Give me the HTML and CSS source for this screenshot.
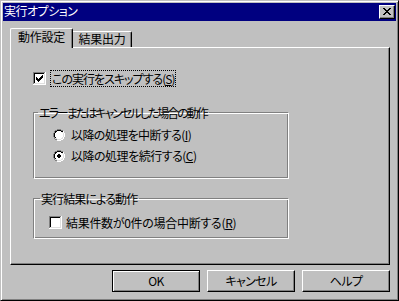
FILE: index.html
```html
<!DOCTYPE html>
<html lang="ja">
<head>
<meta charset="utf-8">
<title>実行オプション</title>
<link rel="stylesheet" href="styles.css">
</head>
<body>
<div class="window">
  <div class="titlebar">
    <span class="title">実行オプション</span>
    <div class="close">
      <svg width="8" height="7" viewBox="0 0 8 7" shape-rendering="crispEdges"><path d="M0 0h2v1H0z M6 0h2v1H6z M1 1h2v1H1z M5 1h2v1H5z M2 2h4v1H2z M3 3h2v1H3z M2 4h4v1H2z M1 5h2v1H1z M5 5h2v1H5z M0 6h2v1H0z M6 6h2v1H6z" fill="#000"/></svg>
    </div>
  </div>
  <div class="body">
    <div class="tabs">
      <div class="tab active">動作設定</div>
      <div class="tab second">結果出力</div>
    </div>
    <div class="panel">
      <div class="check first">
        <span class="box">
          <svg width="13" height="13" viewBox="0 0 13 13" shape-rendering="crispEdges"><path d="M0 0h12v1H1v11H0z" fill="#808080"/><path d="M12 0h1v13H0v-1h12z" fill="#fff"/><path d="M1 1h10v1H2v9H1z" fill="#000"/><path d="M11 1h1v11H1v-1h10z" fill="#dfdfdf"/><rect x="2" y="2" width="9" height="9" fill="#fff"/><path transform="translate(3 3)" d="M6 0h1v1h-1z M5 1h2v1h-2z M0 2h1v1h-1z M4 2h3v1h-3z M0 3h2v1h-2z M3 3h3v1h-3z M0 4h5v1h-5z M1 5h3v1h-3z M2 6h1v1h-1z" fill="#000"/></svg>
        </span>
        <span class="focus">この実行をスキップする(<u>S</u>)</span>
      </div>
      <fieldset class="group g1">
        <legend>エラーまたはキャンセルした場合の動作</legend>
        <div class="group-body radios">
          <div class="radio-row">
            <span class="radio">
              <svg width="12" height="12" viewBox="0 0 12 12" shape-rendering="crispEdges"><path d="M4 2h4v1H4z M3 3h6v1H3z M2 4h8v4H2z M3 8h6v1H3z M4 9h4v1H4z" fill="#fff"/><path d="M4 0h4v1H4z M2 1h2v1H2z M8 1h2v1H8z M1 2h1v2H1z M0 4h1v4H0z M1 8h1v2H1z M2 10h2v1H2z" fill="#808080"/><path d="M10 2h1v2h-1z M11 4h1v4h-1z M10 8h1v2h-1z M8 10h2v1H8z M4 11h4v1H4z" fill="#fff"/><path d="M4 1h4v1H4z M2 2h2v1H2z M8 2h2v1H8z M2 3h1v1H2z M1 4h1v4H1z M2 8h1v1H2z" fill="#000"/><path d="M9 3h1v1H9z M10 4h1v4h-1z M9 8h1v1H9z M2 9h2v1H2z M8 9h2v1H8z M4 10h4v1H4z" fill="#dfdfdf"/></svg>
            </span>
            <span class="label r1">以降の処理を中断する(<u>I</u>)</span>
          </div>
          <div class="radio-row">
            <span class="radio">
              <svg width="12" height="12" viewBox="0 0 12 12" shape-rendering="crispEdges"><path d="M4 2h4v1H4z M3 3h6v1H3z M2 4h8v4H2z M3 8h6v1H3z M4 9h4v1H4z" fill="#fff"/><path d="M4 0h4v1H4z M2 1h2v1H2z M8 1h2v1H8z M1 2h1v2H1z M0 4h1v4H0z M1 8h1v2H1z M2 10h2v1H2z" fill="#808080"/><path d="M10 2h1v2h-1z M11 4h1v4h-1z M10 8h1v2h-1z M8 10h2v1H8z M4 11h4v1H4z" fill="#fff"/><path d="M4 1h4v1H4z M2 2h2v1H2z M8 2h2v1H8z M2 3h1v1H2z M1 4h1v4H1z M2 8h1v1H2z" fill="#000"/><path d="M9 3h1v1H9z M10 4h1v4h-1z M9 8h1v1H9z M2 9h2v1H2z M8 9h2v1H8z M4 10h4v1H4z" fill="#dfdfdf"/><path d="M5 4h2v1H5z M4 5h4v2H4z M5 7h2v1H5z" fill="#000"/></svg>
            </span>
            <span class="label r2">以降の処理を続行する(<u>C</u>)</span>
          </div>
        </div>
      </fieldset>
      <fieldset class="group g2">
        <legend>実行結果による動作</legend>
        <div class="group-body checks">
          <div class="check">
            <span class="box">
              <svg width="13" height="13" viewBox="0 0 13 13" shape-rendering="crispEdges"><path d="M0 0h12v1H1v11H0z" fill="#808080"/><path d="M12 0h1v13H0v-1h12z" fill="#fff"/><path d="M1 1h10v1H2v9H1z" fill="#000"/><path d="M11 1h1v11H1v-1h10z" fill="#dfdfdf"/><rect x="2" y="2" width="9" height="9" fill="#fff"/></svg>
            </span>
            <span class="label c2">結果件数が0件の場合中断する(<u>R</u>)</span>
          </div>
        </div>
      </fieldset>
    </div>
    <div class="buttons">
      <div class="btn default">OK</div>
      <div class="btn">キャンセル</div>
      <div class="btn">ヘルプ</div>
    </div>
  </div>
</div>
</body>
</html>
```
FILE: styles.css
```css
* { box-sizing: border-box; }
html, body { margin: 0; padding: 0; }
body {
  background: #c0c0c0;
  font-family: "Noto Sans CJK JP", "Noto Sans", sans-serif;
  font-size: 12px;
  line-height: 14px;
  color: #000;
  font-feature-settings: "palt";
}
svg { display: block; }
u { text-decoration-thickness: 1px; text-underline-offset: 1px; }

.window {
  width: 399px;
  height: 301px;
  background: #c0c0c0;
  border: 1px solid;
  border-color: #c0c0c0 #000 #000 #c0c0c0;
  box-shadow: inset 1px 1px #fff, inset -1px -1px #808080;
  padding: 2px;
}

.titlebar {
  height: 18px;
  background: #000080;
  color: #fff;
  display: flex;
  align-items: flex-start;
  padding-left: 1px;
}
.title { line-height: 16px; letter-spacing: -0.5px; }
.close {
  width: 16px;
  height: 14px;
  margin: 2px 1px 0 auto;
  background: #c0c0c0;
  border: 1px solid;
  border-color: #fff #000 #000 #fff;
  box-shadow: inset -1px -1px #808080;
  padding: 2px 0 0 3px;
}

.body { padding: 7px 0 0 7px; }

.tabs {
  display: flex;
  align-items: flex-end;
  height: 19px;
}
.tab {
  height: 16px;
  background: #c0c0c0;
  border-top: 1px solid #fff;
  border-right: 1px solid #000;
  box-shadow: inset -1px 0 #808080;
  text-align: center;
  border-top-right-radius: 2px;
  letter-spacing: -0.3px;
}
.tab.active {
  width: 63px;
  height: 20px;
  margin-bottom: -1px;
  border-left: 1px solid #fff;
  border-top-left-radius: 2px;
  padding-top: 1px;
  position: relative;
  z-index: 1;
}
.tab.second { width: 59px; }

.panel {
  width: 380px;
  height: 218px;
  border-top: 1px solid #fff;
  border-left: 1px solid #fff;
  border-right: 1px solid #000;
  border-bottom: 1px solid #000;
  box-shadow: inset -1px -1px #808080;
  padding: 22px 0 0 22px;
}

.check {
  display: flex;
  align-items: center;
  height: 17px;
}
.box { width: 13px; height: 13px; margin-right: 4px; }
.focus {
  display: block;
  height: 17px;
  line-height: 15px;
  border: 1px dotted #000;
  padding: 0 1px;
  letter-spacing: -1px;
}

.group {
  width: 256px;
  margin: 0;
  min-width: 0;
  border: 1px solid;
  border-color: #808080 #fff #fff #808080;
  box-shadow: inset 1px 1px #fff, inset -1px -1px #808080;
}
.group legend {
  line-height: 13px;
  padding: 0 2px 0 1px;
  margin-left: 4px;
}
.g1 legend { letter-spacing: -2px; }
.g2 legend { margin-left: 6px; letter-spacing: -0.9px; }
.g1 { margin-top: 19px; padding: 6px 0 12px 0; }
.g2 { margin-top: 13px; padding: 9px 0 7px 0; }
.radios { padding-left: 19px; }
.checks { padding-left: 15px; }

.radio-row {
  display: flex;
  align-items: center;
  height: 20px;
}
.radio-row + .radio-row { margin-top: 1px; }
.radio { width: 12px; height: 12px; margin-right: 6px; }
.r1 { letter-spacing: -0.6px; }
.r2 { letter-spacing: -0.5px; }
.c2 { letter-spacing: -0.3px; }

.buttons {
  width: 380px;
  margin-top: 5px;
  display: flex;
  justify-content: flex-end;
  gap: 7px;
}
.btn {
  width: 88px;
  height: 22px;
  line-height: 20px;
  text-align: center;
  border: 1px solid;
  border-color: #fff #000 #000 #fff;
  box-shadow: inset -1px -1px #808080;
  letter-spacing: -0.6px;
}
.btn.default {
  border-color: #000;
  box-shadow: inset 1px 1px #fff, inset -1px -1px #808080;
}
```
